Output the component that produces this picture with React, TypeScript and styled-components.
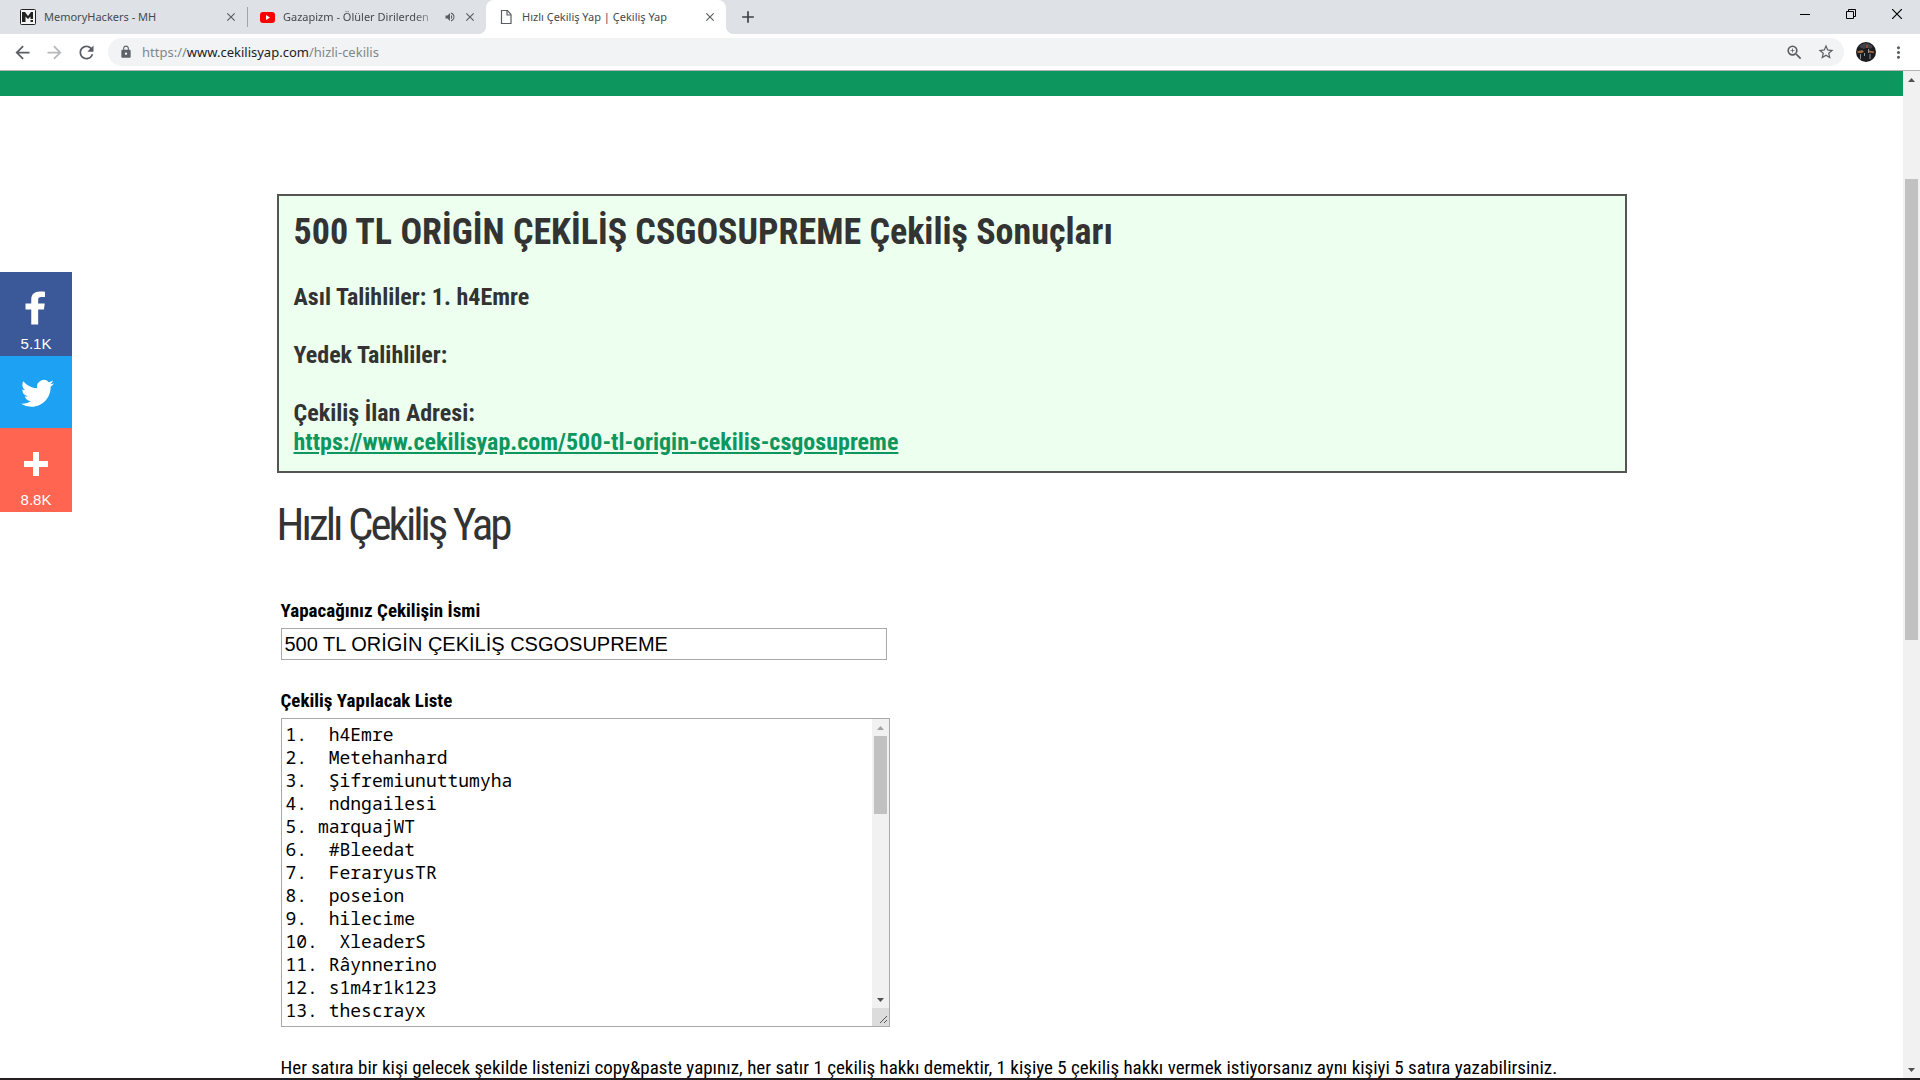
import React from "react";
import styled, { createGlobalStyle } from "styled-components";
import {
  MdAdd,
  MdArrowBack,
  MdArrowForward,
  MdClose,
  MdLock,
  MdMoreVert,
  MdRefresh,
  MdStarBorder,
  MdVolumeUp,
  MdZoomIn,
} from "react-icons/md";

const uiFont = '"Noto Sans", "Open Sans", sans-serif';
const siteFont = '"Roboto Condensed", Roboto, sans-serif';
const green = "#0d965e";

const GlobalStyle = createGlobalStyle`
  *, *::before, *::after { box-sizing: border-box; }
  body { margin: 0; background: #fff; }
  h1, h2, p { margin: 0; }
  svg { display: block; flex: none; }
`;

const Window = styled.div`
  display: flex;
  flex-direction: column;
  height: 100vh;
  overflow: hidden;
  background: #fff;
`;

/* ---------- browser chrome ---------- */

const TabStrip = styled.header`
  display: flex;
  height: 34px;
  flex: none;
  padding-left: 8px;
  background: #dee1e6;
  font: 11px/16px ${uiFont};
  color: #45494d;
`;

const Tab = styled.div<{ $active?: boolean }>`
  position: relative;
  display: flex;
  align-items: center;
  width: ${(p) => (p.$active ? 240 : 239)}px;
  padding: 0 8px 0 12px;
  border-radius: 8px 8px 0 0;
  background: ${(p) => (p.$active ? "#fff" : "transparent")};

  &::before,
  &::after {
    content: ${(p) => (p.$active ? '""' : "none")};
    position: absolute;
    bottom: 0;
    width: 8px;
    height: 8px;
  }
  &::before {
    right: 100%;
    background: radial-gradient(circle at 0 0, transparent 8px, #fff 8px);
  }
  &::after {
    left: 100%;
    background: radial-gradient(circle at 100% 0, transparent 8px, #fff 8px);
  }
`;

const TabDivider = styled.span`
  align-self: center;
  width: 1px;
  height: 20px;
  margin-right: -1px;
  background: #a1a4a8;
`;

const TabTitle = styled.span<{ $fade?: boolean }>`
  flex: 1;
  margin-left: 8px;
  white-space: nowrap;
  mask-image: ${(p) =>
    p.$fade ? "linear-gradient(to left, rgba(0, 0, 0, 0.3), #000 20px)" : "none"};
`;

const PlainButton = styled.button<{ $w?: number; $tone?: string }>`
  display: flex;
  flex: none;
  align-items: center;
  justify-content: center;
  width: ${(p) => p.$w ?? 16}px;
  padding: 0;
  border: 0;
  background: none;
  color: ${(p) => p.$tone ?? "#5a5e63"};
`;

const SoundSlot = styled.span`
  margin: 0 6px 0 11px;
  color: #5a5e63;
`;

const WindowControls = styled.div`
  display: flex;
  height: 28px;
  margin-left: auto;
`;

const Toolbar = styled.div`
  display: flex;
  align-items: center;
  flex: none;
  height: 37px;
  padding: 0 0 0 6px;
  border-bottom: 1px solid #b1b3b5;
  background: #fff;
`;

const AddressBar = styled.div`
  display: flex;
  flex: 1;
  align-items: center;
  height: 28px;
  margin: 0 12px 0 6px;
  padding: 0 2px 0 11px;
  border-radius: 14px;
  background: #f1f3f4;
  color: #5f6368;
`;

const Address = styled.div`
  flex: 1;
  margin-left: 9px;
  font: 13px/20px ${uiFont};
  color: #80868b;

  b {
    font-weight: 400;
    color: #202124;
  }
`;

/* ---------- page frame ---------- */

const Viewport = styled.div`
  position: relative;
  display: flex;
  flex: 1;
  min-height: 0;
`;

const Page = styled.div`
  flex: 1;
  min-width: 0;
  overflow: hidden;
`;

const GreenBar = styled.div`
  height: 25px;
  background: ${green};
`;

const Content = styled.main`
  max-width: 1350px;
  margin: 0 auto;
  padding-top: 98px;
  font-family: ${siteFont};
  color: #333;
`;

const ScrollTrack = styled.div`
  display: flex;
  flex: none;
  flex-direction: column;
  width: 17px;
  background: #f1f1f1;
`;

const ScrollArrow = styled.div<{ $down?: boolean; $dim?: boolean }>`
  display: flex;
  align-items: center;
  justify-content: center;
  height: 17px;
  color: ${(p) => (p.$dim ? "#a3a3a3" : "#505050")};

  svg {
    transform: ${(p) => (p.$down ? "rotate(180deg)" : "none")};
  }
`;

const ScrollLane = styled.div<{ $before: number; $thumb: number; $after: number }>`
  display: grid;
  flex: 1;
  grid-template-rows: ${(p) => `${p.$before}fr ${p.$thumb}fr ${p.$after}fr`};
  padding: 0 2px;
`;

const ScrollThumb = styled.div`
  grid-row: 2;
  background: #c1c1c1;
`;

const Taskbar = styled.footer`
  flex: none;
  height: 2px;
  background: #231f20;
`;

/* ---------- result box and form ---------- */

const ResultBox = styled.section`
  padding: 15px 15px 14px;
  border: 2px solid #555;
  background: #edffef;
`;

const ResultTitle = styled.h2`
  font-size: 36px;
  line-height: 43px;
`;

const ResultLine = styled.p`
  margin-top: 29px;
  font-size: 24px;
  font-weight: 700;
  line-height: 29px;
`;

const ResultLink = styled.a`
  display: block;
  color: ${green};
`;

const PageTitle = styled.h1`
  margin-top: 25px;
  font-size: 45px;
  font-weight: 400;
  letter-spacing: -3px;
  line-height: 53px;
`;

const Form = styled.form`
  display: flex;
  flex-direction: column;
  gap: 29px;
  padding: 48px 4px 0;
  color: #000;
  font-size: 19px;
  line-height: 24px;
`;

const Field = styled.div`
  display: flex;
  flex-direction: column;
  gap: 5px;

  label {
    font-weight: 700;
  }
`;

const TextInput = styled.input`
  width: 606px;
  max-width: 100%;
  height: 32px;
  padding: 0 3px;
  border: 1px solid #a9a9a9;
  font: 20px/24px "Liberation Sans", Arial, sans-serif;
  color: #000;
`;

const ListFrame = styled.div`
  display: flex;
  width: 609px;
  max-width: 100%;
  height: 309px;
  border: 1px solid #a9a9a9;
`;

const ListArea = styled.textarea`
  flex: 1;
  min-width: 0;
  padding: 4px;
  border: 0;
  overflow: hidden;
  resize: none;
  background: #fff;
  font: 18px/23px "Noto Sans Mono", "DejaVu Sans Mono", monospace;
  color: #000;
`;

const ResizeCorner = styled.div`
  display: flex;
  align-items: flex-end;
  justify-content: flex-end;
  height: 18px;
  padding: 0 1px 1px 0;
  background: #dcdcdc;
`;

/* ---------- share rail ---------- */

const ShareRail = styled.nav`
  position: absolute;
  top: 201px;
  left: 0;
  width: 72px;
`;

const ShareButton = styled.button<{ $bg: string }>`
  display: flex;
  flex-direction: column;
  align-items: center;
  width: 100%;
  padding: 12px 0 0;
  border: 0;
  background: ${(p) => p.$bg};
  color: #fff;
  font: 15px/24px "Liberation Sans", Arial, sans-serif;

  &:nth-child(2) {
    padding-bottom: 12px;
  }
`;

const shares = [
  {
    name: "Facebook",
    color: "#3b5998",
    count: "5.1K",
    path: "M22 5.16c-.406-.054-1.806-.16-3.43-.16-3.4 0-5.733 1.825-5.733 5.17v2.882H9v3.913h3.837V27h4.604V16.965h3.823l.587-3.913h-4.41v-2.5c0-1.123.347-1.903 2.198-1.903H22V5.16z",
  },
  {
    name: "Twitter",
    color: "#1da1f2",
    count: "",
    path: "M27.996 10.116c-.81.36-1.68.602-2.592.71a4.526 4.526 0 0 0 1.984-2.496 9.037 9.037 0 0 1-2.866 1.095 4.513 4.513 0 0 0-7.69 4.116 12.81 12.81 0 0 1-9.3-4.715 4.49 4.49 0 0 0-.612 2.27 4.51 4.51 0 0 0 2.008 3.755 4.495 4.495 0 0 1-2.044-.564v.057a4.515 4.515 0 0 0 3.62 4.425 4.52 4.52 0 0 1-2.04.077 4.517 4.517 0 0 0 4.217 3.134 9.055 9.055 0 0 1-5.604 1.93A9.18 9.18 0 0 1 6 23.85a12.773 12.773 0 0 0 6.918 2.027c8.3 0 12.84-6.876 12.84-12.84 0-.195-.005-.39-.014-.583a9.172 9.172 0 0 0 2.252-2.336",
  },
  {
    name: "AddThis",
    color: "#ff6550",
    count: "8.8K",
    path: "M18 14V8h-4v6H8v4h6v6h4v-6h6v-4h-6z",
  },
];

const entrants = [
  "1.  h4Emre",
  "2.  Metehanhard",
  "3.  Şifremiunuttumyha",
  "4.  ndngailesi",
  "5. marquajWT",
  "6.  #Bleedat",
  "7.  FeraryusTR",
  "8.  poseion",
  "9.  hilecime",
  "10.  XleaderS",
  "11. Râynnerino",
  "12. s1m4r1k123",
  "13. thescrayx",
].join("\n");

const Triangle = () => (
  <svg width="7" height="4" viewBox="0 0 7 4" fill="currentColor">
    <path d="M3.5 0 7 4H0z" />
  </svg>
);

const HackersLogo = () => (
  <svg width="16" height="16" viewBox="0 0 16 16">
    <rect x="0.5" y="0.5" width="15" height="15" rx="1" fill="#f4f4f4" stroke="#222" />
    <path d="M2 3h3l3 4 3-4h2v7h-2.500V7.500L8 10 5.500 7.500V13H2z" fill="#222" />
    <rect x="10.500" y="11" width="2.500" height="2" fill="#222" />
  </svg>
);

const VideoLogo = () => (
  <svg width="16" height="16" viewBox="0 0 16 16">
    <rect x="1" y="3" width="15" height="11" rx="3" fill="#f00" />
    <path d="M7 6v5l4-2.500z" fill="#fff" />
  </svg>
);

const PageIcon = () => (
  <svg width="16" height="16" viewBox="0 0 16 16" fill="none" stroke="#5a5e63" strokeWidth="1.200">
    <path d="M3.500 1.500h6l3.500 4v9H3.500z" />
    <path d="M9 1.500V6h4" />
  </svg>
);

const Avatar = () => (
  <svg width="20" height="20" viewBox="0 0 20 20">
    <circle cx="10" cy="10" r="10" fill="#1b1c20" />
    <path d="M3 5c2-3 5-4 7-4s5 1 7 4l-3 2-3-2-3 2z" fill="#3c4248" />
    <path d="M10 3h2v3h-2z" fill="#8a4a34" />
    <path d="M1 9.500 6 8l2 1.500L6 11H2zM13 8.500l5 1v1.500l-5-.5z" fill="#a8693f" />
    <path d="M4 12h1v5H4zM8 11h1v3H8zM13.500 12h1v5h-1zM12 7h1v4h-1z" fill="#8d959c" />
  </svg>
);

export default function App() {
  return (
    <Window>
      <GlobalStyle />
      <TabStrip>
        <Tab>
          <HackersLogo />
          <TabTitle>MemoryHackers - MH</TabTitle>
          <PlainButton aria-label="Sekmeyi kapat">
            <MdClose size={14} />
          </PlainButton>
        </Tab>
        <TabDivider />
        <Tab>
          <VideoLogo />
          <TabTitle $fade>Gazapizm - Ölüler Dirilerden</TabTitle>
          <SoundSlot>
            <MdVolumeUp size={12} />
          </SoundSlot>
          <PlainButton aria-label="Sekmeyi kapat">
            <MdClose size={14} />
          </PlainButton>
        </Tab>
        <Tab $active>
          <PageIcon />
          <TabTitle>Hızlı Çekiliş Yap | Çekiliş Yap</TabTitle>
          <PlainButton aria-label="Sekmeyi kapat">
            <MdClose size={14} />
          </PlainButton>
        </Tab>
        <PlainButton $w={44} $tone="#3c4043" aria-label="Yeni sekme">
          <MdAdd size={20} />
        </PlainButton>
        <WindowControls>
          <PlainButton $w={46} aria-label="Simge durumuna küçült">
            <svg width="10" height="10" viewBox="0 0 10 10">
              <path d="M0 5.500h10" stroke="#000" />
            </svg>
          </PlainButton>
          <PlainButton $w={46} aria-label="Önceki boyut">
            <svg width="10" height="10" viewBox="0 0 10 10" fill="none" stroke="#000">
              <path d="M.5 2.500h7v7h-7zM2.500 2.500v-2h7v7h-2" />
            </svg>
          </PlainButton>
          <PlainButton $w={46} aria-label="Kapat">
            <svg width="10" height="10" viewBox="0 0 10 10">
              <path d="M0 0l10 10M10 0 0 10" stroke="#000" strokeWidth="1.200" />
            </svg>
          </PlainButton>
        </WindowControls>
      </TabStrip>

      <Toolbar>
        <PlainButton $w={32} aria-label="Geri">
          <MdArrowBack size={21} />
        </PlainButton>
        <PlainButton $w={32} $tone="#b6b8ba" aria-label="İleri">
          <MdArrowForward size={21} />
        </PlainButton>
        <PlainButton $w={32} aria-label="Yenile">
          <MdRefresh size={21} />
        </PlainButton>
        <AddressBar>
          <MdLock size={14} />
          <Address>
            https://<b>www.cekilisyap.com</b>/hizli-cekilis
          </Address>
          <PlainButton $w={32} aria-label="Yakınlaştır">
            <MdZoomIn size={19} />
          </PlainButton>
          <PlainButton $w={32} aria-label="Yer işareti">
            <MdStarBorder size={18} />
          </PlainButton>
        </AddressBar>
        <Avatar />
        <PlainButton $w={44} aria-label="Menü">
          <MdMoreVert size={19} />
        </PlainButton>
      </Toolbar>

      <Viewport>
        <Page>
          <GreenBar />
          <Content>
            <ResultBox>
              <ResultTitle>500 TL ORİGİN ÇEKİLİŞ CSGOSUPREME Çekiliş Sonuçları</ResultTitle>
              <ResultLine>Asıl Talihliler: 1. h4Emre</ResultLine>
              <ResultLine>Yedek Talihliler:</ResultLine>
              <ResultLine>
                Çekiliş İlan Adresi:
                <ResultLink href="#ilan">
                  https://www.cekilisyap.com/500-tl-origin-cekilis-csgosupreme
                </ResultLink>
              </ResultLine>
            </ResultBox>
            <PageTitle>Hızlı Çekiliş Yap</PageTitle>
            <Form>
              <Field>
                <label htmlFor="draw-name">Yapacağınız Çekilişin İsmi</label>
                <TextInput id="draw-name" defaultValue="500 TL ORİGİN ÇEKİLİŞ CSGOSUPREME" />
              </Field>
              <Field>
                <label htmlFor="draw-list">Çekiliş Yapılacak Liste</label>
                <ListFrame>
                  <ListArea id="draw-list" spellCheck={false} defaultValue={entrants} />
                  <ScrollTrack>
                    <ScrollArrow $dim>
                      <Triangle />
                    </ScrollArrow>
                    <ScrollLane $before={0} $thumb={78} $after={177}>
                      <ScrollThumb />
                    </ScrollLane>
                    <ScrollArrow $down>
                      <Triangle />
                    </ScrollArrow>
                    <ResizeCorner>
                      <svg width="9" height="10" viewBox="0 0 9 10" stroke="#555">
                        <path d="M1 8 8 1M5 8l3-3" />
                      </svg>
                    </ResizeCorner>
                  </ScrollTrack>
                </ListFrame>
              </Field>
              <p>
                Her satıra bir kişi gelecek şekilde listenizi copy&amp;paste yapınız, her satır 1
                çekiliş hakkı demektir, 1 kişiye 5 çekiliş hakkı vermek istiyorsanız aynı kişiyi 5
                satıra yazabilirsiniz.
              </p>
            </Form>
          </Content>
        </Page>

        <ScrollTrack>
          <ScrollArrow>
            <Triangle />
          </ScrollArrow>
          <ScrollLane $before={91} $thumb={461} $after={421}>
            <ScrollThumb />
          </ScrollLane>
          <ScrollArrow $down>
            <Triangle />
          </ScrollArrow>
        </ScrollTrack>

        <ShareRail aria-label="Paylaş">
          {shares.map((s) => (
            <ShareButton key={s.name} $bg={s.color} aria-label={s.name}>
              <svg width="48" height="48" viewBox="0 0 32 32" fill="#fff">
                <path d={s.path} />
              </svg>
              {s.count && <span>{s.count}</span>}
            </ShareButton>
          ))}
        </ShareRail>
      </Viewport>
      <Taskbar />
    </Window>
  );
}
